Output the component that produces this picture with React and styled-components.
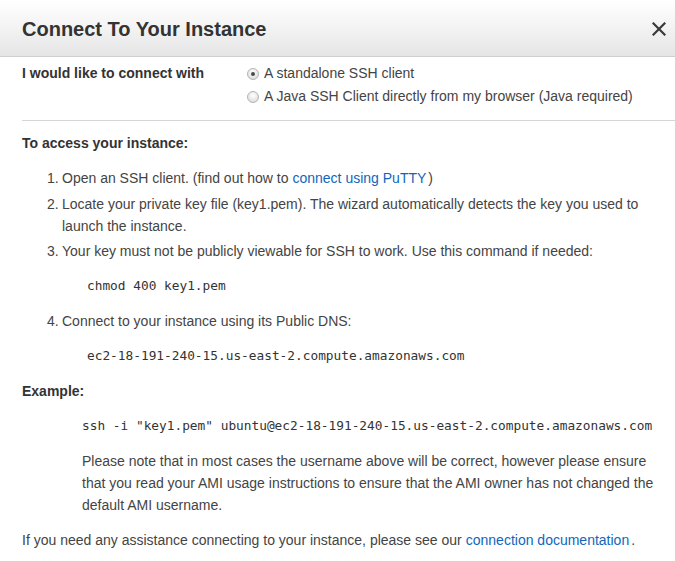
import React from "react";
import styled, { createGlobalStyle } from "styled-components";

const GlobalStyle = createGlobalStyle`
  html, body {
    margin: 0;
    padding: 0;
    background: #ffffff;
  }
  body {
    font-family: "Liberation Sans", Arial, sans-serif;
    color: #444444;
  }
`;

const Dialog = styled.div`
  width: 675px;
  height: 561px;
  overflow: hidden;
  background: #ffffff;
`;

const Header = styled.div`
  height: 56px;
  box-sizing: border-box;
  display: flex;
  align-items: center;
  justify-content: space-between;
  padding: 2px 6px 0 22px;
  background: linear-gradient(to bottom, #ffffff 0%, #f4f4f4 45%, #e5e5e5 100%);
  border-bottom: 1px solid #cfcfcf;
  height: 57px;
`;

const Title = styled.h1`
  margin: 0;
  font-size: 20px;
  font-weight: bold;
  color: #333333;
  line-height: 24px;
`;

const CloseButton = styled.button`
  width: 20px;
  height: 20px;
  padding: 0;
  border: 0;
  background: none;
  display: flex;
  align-items: center;
  justify-content: center;
  cursor: pointer;
`;

const Body = styled.div`
  padding: 5px 10px 0 22px;
  font-size: 14px;
  line-height: 22px;
`;

const ConnectRow = styled.div`
  display: flex;
  align-items: flex-start;
`;

const Label = styled.div`
  width: 225px;
  font-weight: bold;
  color: #333333;
  line-height: 23px;
`;

const Options = styled.div`
  display: flex;
  flex-direction: column;
`;

const Option = styled.label`
  display: flex;
  align-items: center;
  gap: 5px;
  line-height: 23px;
  color: #444444;
`;

const Radio = styled.span`
  width: 10px;
  height: 10px;
  border-radius: 50%;
  border: 1px solid #b4b4b4;
  background: radial-gradient(circle at 50% 35%, #ffffff 0%, #e6e6e6 60%, #d0d0d0 100%);
  display: flex;
  align-items: center;
  justify-content: center;
  flex: none;

  &::after {
    content: "";
    width: 4px;
    height: 4px;
    border-radius: 50%;
    background: ${(p) => (p.$checked ? "#4a4a4a" : "transparent")};
  }
`;

const Divider = styled.hr`
  margin: 12px -10px 0 0;
  border: 0;
  border-top: 1px solid #d5d5d5;
`;

const Heading = styled.div`
  font-weight: bold;
  color: #333333;
  margin-top: ${(p) => p.$top || 13}px;
`;

const Steps = styled.ol`
  list-style: none;
  margin: 13px 0 0;
  padding: 0 0 0 25px;
`;

const Step = styled.li`
  display: flex;
  margin-top: ${(p) => p.$top || 0}px;
`;

const StepNum = styled.span`
  width: 15px;
  flex: none;
`;

const StepBody = styled.div`
  flex: 1;
`;

const Code = styled.div`
  font-family: "DejaVu Sans Mono", "Liberation Mono", monospace;
  font-size: 12.8px;
  line-height: 22px;
  color: #333333;
  margin: 13px 0 0 ${(p) => p.$indent || 0}px;
  white-space: nowrap;
`;

const Note = styled.p`
  margin: 13px 0 0 60px;
  color: #444444;
`;

const Footer = styled.p`
  margin: 13px 0 0;
  color: #444444;
`;

const Link = styled.a`
  color: #1166bb;
  text-decoration: none;
  margin-left: 4px;
  margin-right: 2px;
`;

function CloseIcon() {
  return (
    <svg width="14" height="14" viewBox="0 0 14 14">
      <path d="M1.5 1.5 L12.5 12.5 M12.5 1.5 L1.5 12.5" stroke="#3a3a3a" strokeWidth="2.2" strokeLinecap="square" />
    </svg>
  );
}

export default function App() {
  return (
    <Dialog>
      <GlobalStyle />
      <Header>
        <Title>Connect To Your Instance</Title>
        <CloseButton aria-label="Close">
          <CloseIcon />
        </CloseButton>
      </Header>
      <Body>
        <ConnectRow>
          <Label>I would like to connect with</Label>
          <Options>
            <Option>
              <Radio $checked />A standalone SSH client
            </Option>
            <Option>
              <Radio />A Java SSH Client directly from my browser (Java required)
            </Option>
          </Options>
        </ConnectRow>
        <Divider />

        <Heading $top={11}>To access your instance:</Heading>
        <Steps>
          <Step>
            <StepNum>1.</StepNum>
            <StepBody>
              Open an SSH client. (find out how to<Link href="#">connect using PuTTY</Link>)
            </StepBody>
          </Step>
          <Step $top={4}>
            <StepNum>2.</StepNum>
            <StepBody>
              Locate your private key file (key1.pem). The wizard automatically detects the key you used to launch the
              instance.
            </StepBody>
          </Step>
          <Step $top={3}>
            <StepNum>3.</StepNum>
            <StepBody>
              Your key must not be publicly viewable for SSH to work. Use this command if needed:
              <Code $indent={25}>chmod 400 key1.pem</Code>
            </StepBody>
          </Step>
          <Step $top={13}>
            <StepNum>4.</StepNum>
            <StepBody>
              Connect to your instance using its Public DNS:
              <Code $indent={25}>ec2-18-191-240-15.us-east-2.compute.amazonaws.com</Code>
            </StepBody>
          </Step>
        </Steps>

        <Heading>Example:</Heading>
        <Code $indent={60}>ssh -i "key1.pem" ubuntu@ec2-18-191-240-15.us-east-2.compute.amazonaws.com</Code>
        <Note>
          Please note that in most cases the username above will be correct, however please ensure that you read your
          AMI usage instructions to ensure that the AMI owner has not changed the default AMI username.
        </Note>
        <Footer>
          If you need any assistance connecting to your instance, please see our
          <Link href="#">connection documentation</Link>.
        </Footer>
      </Body>
    </Dialog>
  );
}
